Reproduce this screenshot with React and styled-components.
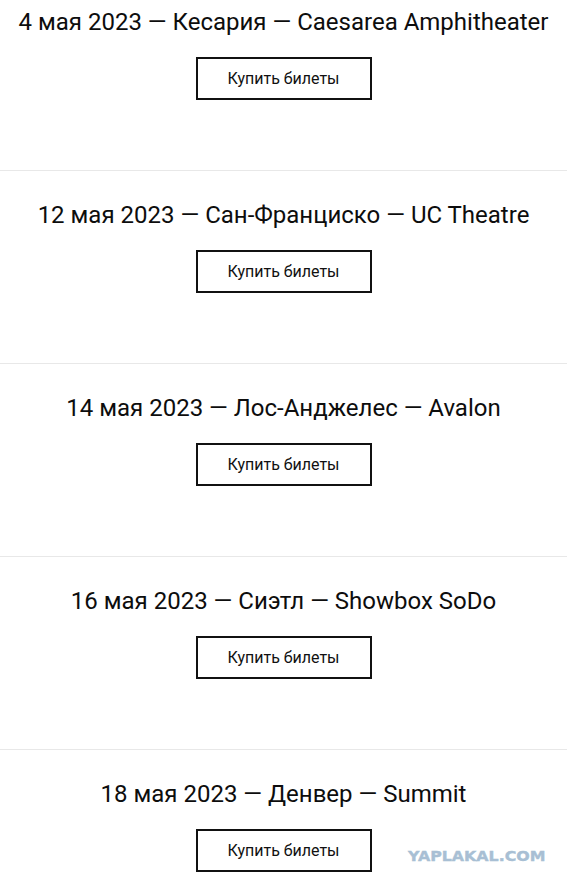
import React from 'react';
import styled, { createGlobalStyle } from 'styled-components';

const GlobalStyle = createGlobalStyle`
    html, body {
        margin: 0;
        padding: 0;
        background: #fff;
    }
    body {
        font-family: Roboto, "Liberation Sans", Arial, sans-serif;
        color: #111;
    }
`;

const Page = styled.div`
    position: relative;
    width: 571px;
    height: 887px;
    overflow: hidden;
`;

const List = styled.div`
    display: flex;
    flex-direction: column;
    width: 567px;
`;

const Concert = styled.section`
    display: flex;
    flex-direction: column;
    align-items: center;
    padding: ${p => (p.$first ? '8px' : '30px')} 0 70px;
    border-top: ${p => (p.$first ? 'none' : '1px solid #e8e8e8')};
`;

const Title = styled.h2`
    margin: 0 0 21px;
    font-size: 24px;
    line-height: 28px;
    font-weight: 400;
    color: #0d0d0d;
    text-align: center;
    white-space: nowrap;
`;

const BuyButton = styled.a`
    display: flex;
    align-items: center;
    justify-content: center;
    box-sizing: border-box;
    width: 176px;
    height: 43px;
    border: 2px solid #111;
    font-size: 16px;
    color: #111;
    text-decoration: none;
`;

// водяной знак поверх страницы
const Watermark = styled.div`
    position: absolute;
    left: 408px;
    top: 847px;
    font-family: "DejaVu Sans", Verdana, sans-serif;
    font-weight: 700;
    font-size: 14px;
    line-height: 18px;
    color: #a8bfd4;
    -webkit-text-stroke: 0.4px #a8bfd4;
    transform: scaleX(1.13);
    transform-origin: left center;
`;

const concerts = [
    '4 мая 2023 — Кесария — Caesarea Amphitheater',
    '12 мая 2023 — Сан-Франциско — UC Theatre',
    '14 мая 2023 — Лос-Анджелес — Avalon',
    '16 мая 2023 — Сиэтл — Showbox SoDo',
    '18 мая 2023 — Денвер — Summit',
];

const App = () => (
    <>
        <GlobalStyle />
        <Page>
            <List>
                {concerts.map((c, i) => (
                    <Concert key={c} $first={i === 0}>
                        <Title>{c}</Title>
                        <BuyButton href="#">Купить билеты</BuyButton>
                    </Concert>
                ))}
            </List>
            <Watermark>YAPLAKAL.COM</Watermark>
        </Page>
    </>
);

export default App;
